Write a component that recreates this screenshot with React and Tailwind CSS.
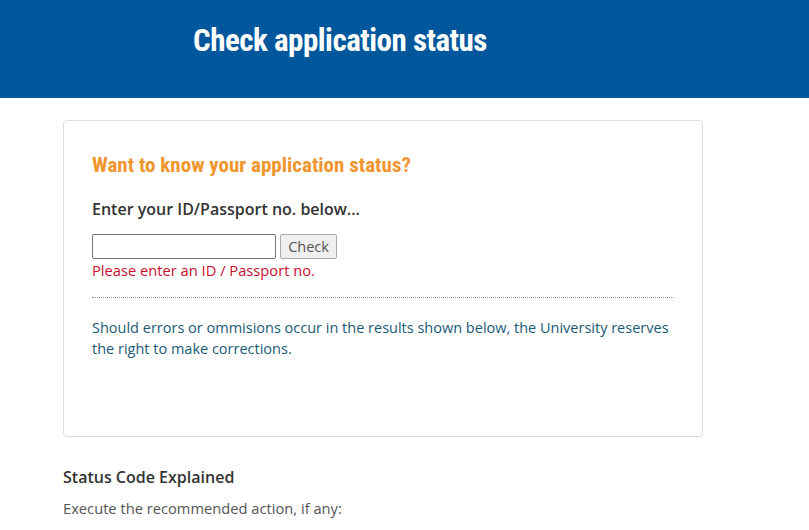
import React from "react";

const narrow = { fontFamily: '"Liberation Sans Narrow", "Roboto Condensed", "DejaVu Sans Condensed", sans-serif' };

export default function App() {
  return (
    <div className="min-h-[530px] bg-white" style={{ fontFamily: '"Open Sans", "Liberation Sans", sans-serif' }}>
      <header className="h-[98px] bg-[#00579b]">
        <h1
          className="pl-[193px] pt-[21px] text-[31px] font-bold leading-[40px] tracking-[-0.5px] text-white"
          style={narrow}
        >
          Check application status
        </h1>
      </header>

      <main className="px-[63px] pt-[22px]">
        <div className="w-[640px] h-[317px] rounded border border-[#dcdcdc] px-[28px] pt-[30px]">
          <h2 className="text-[21px] font-bold leading-[28px] text-[#f0962f]" style={narrow}>
            Want to know your application status?
          </h2>
          <p className="mt-[19px] text-[16px] font-semibold leading-[22px] text-[#333]">
            Enter your ID/Passport no. below...
          </p>
          <form className="mt-[14px] flex items-center gap-[4px]" onSubmit={(e) => e.preventDefault()}>
            <input
              type="text"
              className="h-[25px] w-[184px] rounded-[2px] border border-[#767676] bg-white px-1 text-sm"
            />
            <button
              type="submit"
              className="h-[25px] w-[57px] rounded-[2px] border border-[#aaa] bg-[#efefef] text-[14.5px] text-[#555]"
            >
              Check
            </button>
          </form>
          <p className="mt-[1px] text-[14.7px] leading-[20px] text-[#c8102e]">Please enter an ID / Passport no.</p>
          <hr className="mt-[17px] border-0 border-t border-dotted border-[#999]" />
          <p className="mt-[19px] text-[14.5px] leading-[21px] text-[#1a5a78]">
            Should errors or ommisions occur in the results shown below, the University reserves the right to make
            corrections.
          </p>
        </div>

        <h3 className="mt-[29px] text-[16px] font-semibold leading-[22px] text-[#333]">Status Code Explained</h3>
        <p className="mt-[10px] text-[14.7px] leading-[20px] text-[#555]">Execute the recommended action, if any:</p>
      </main>
    </div>
  );
}
